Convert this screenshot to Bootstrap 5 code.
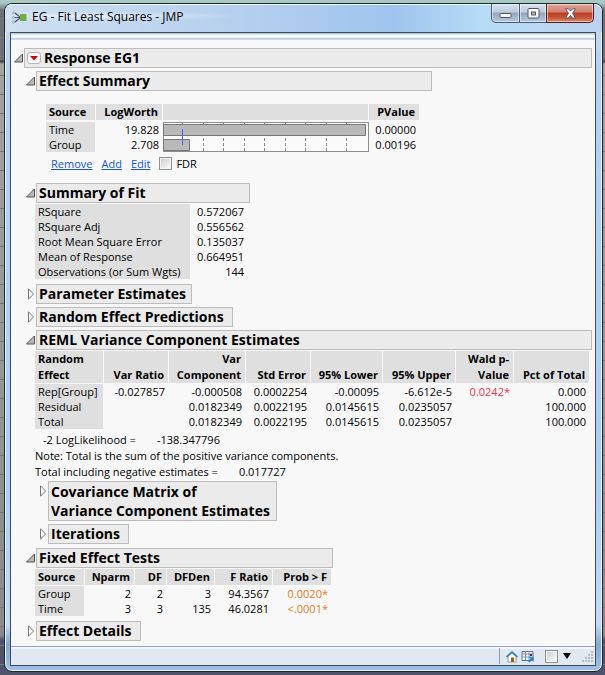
<!DOCTYPE html>
<html lang="en">
<head>
<meta charset="utf-8">
<meta name="viewport" content="width=device-width, initial-scale=1">
<title>EG - Fit Least Squares - JMP</title>
<link href="https://cdn.jsdelivr.net/npm/bootstrap@5.3.0/dist/css/bootstrap.min.css" rel="stylesheet">
<style>
body{font:11px/15px "Open Sans","Noto Sans",sans-serif;color:#000;background:linear-gradient(#a9c9c4 0,#a9c9c4 3px,transparent 10px),repeating-linear-gradient(transparent 0,transparent 18px,#777 18px,#777 19px),linear-gradient(#6c7078 0,#6c7078 60px,#333 61px,#a5a3a0 64px,#8c8a88 635px,#50536c 640px);}
.win{margin:3px 2px 3px 4px;border:1px solid #20262e;border-radius:8px;min-height:calc(100vh - 6px);background:linear-gradient(#c6d8ee 0,#c6d8ee 28px,#b4d3f3 60px,#a9cff8 480px,#c2dcf6 620px,#84aad2 640px,#9fc0e6 100%);box-shadow:inset 0 0 0 1px #e8f5ff;}
.titlebar{height:28px;padding-left:7px;border-radius:7px 7px 0 0;background:radial-gradient(ellipse at 90px 12px,rgba(240,247,253,.8) 0,rgba(220,234,248,.4) 90px,transparent 150px),linear-gradient(90deg,#cfdff0 0,#b5cfee 40%,#9fc4ee 65%,#b7dcf6 80%,#bcd3ef 100%);box-shadow:inset 0 1px #eef8ff;}
.titletext{font-size:12px;line-height:26px;}
.appicon{margin:6px 5px 0 0;}
.wbtn{height:19px;border:1px solid #4c5a6e;border-top:0;padding:0;display:flex;align-items:center;justify-content:center;background:linear-gradient(#d5e2ef 0,#bccada 45%,#93a6bd 50%,#b5c9e0 100%);box-shadow:inset 0 0 0 1px rgba(255,255,255,.5);}
.wmin{width:29px;border-radius:0 0 0 5px;}
.wmax{width:28px;margin-left:-1px;}
.wclose{width:48px;margin-left:-1px;border-color:#571a1c;border-radius:0 0 5px 0;background:linear-gradient(#e3a697 0,#d18070 45%,#b83a23 50%,#c8553a 75%,#dd8a65 100%);}
.client{margin:0 6px 5px 5px;border:1px solid #3f4a5b;background:#f8f8f8;}
.toolstrip{height:7px;background:linear-gradient(#a9bcd8 0,#f7faff 35%,#f7faff 60%,#b9cbe2 80%,#d6e3f2 100%);}
.report{padding:8px 3px 5px 3px;}
.outline-row{display:flex;align-items:flex-start;}
.bar{background:#ebebeb;border:1px solid #bcbcbc;margin:0;padding:0 2px;min-height:20px;font-size:14px;line-height:18px;font-weight:700;color:#000;}
.bar.two{line-height:19px;}
.gap3{margin-bottom:3px;}
.first{margin-top:3px;}
.tog{width:10px;height:20px;padding:0;border:0;background:none;display:flex;align-items:center;flex:none;}
.tog svg{display:block;}
.redtri{width:14px;height:12px;padding:0;border:1px solid #b5b5b5;border-radius:3px;background:#fafafa;display:flex;align-items:center;justify-content:center;margin-right:3px;}
.level1{padding-left:12px;}
.level2{padding:1px 0 0 12px;}
.body1{margin:1px 0 5px 9px;}
.notes{margin:-2px 0 0 9px;line-height:16px;}
.notes .pair{display:flex;gap:21px;}
.effects{padding:13px 0 12px 20px;}
.links{padding:4px 0 0 5px;gap:9px;}
.stat{table-layout:fixed;border-collapse:separate;border-spacing:0;}
.stat th,.stat td{padding:0 4px 0 3px;text-align:right;white-space:nowrap;vertical-align:bottom;}
.stat thead th{background:#dfdfdf;border-right:1px solid #f8f8f8;border-bottom:1px solid #f8f8f8;line-height:16px;font-weight:700;}
.effects .stat thead th{border-bottom-width:2px;}
.stat tbody th{background:#dfdfdf;font-weight:400;border-right:1px solid #f8f8f8;}
.stat tr>:first-child{text-align:left;}
.stat tbody tr{height:15px;}
.stat .plot{padding:0;line-height:0;text-align:left;}
.plot svg{display:block;}
.stat .red{color:#ef3449;}
.stat .orange{color:#e57a1e;}
.cmd{color:#1457cf;text-decoration:underline;}
.tick{appearance:none;width:13px;height:13px;margin:0;border:1px solid #8e8f8f;background:linear-gradient(135deg,#c8ccd1,#fff);outline:1px solid #f4f4f4;outline-offset:-2px;}
.w-eff{width:396px}.w-sum{width:214px}.w-par{width:156px}.w-ran{width:197px}.w-cov{width:229px}.w-it{width:81px}.w-fix{width:297px}.w-det{width:105px}
.statusbar{height:19px;border-top:1px solid #97a0cd;background:#e1e8f2;box-shadow:inset 0 2px #f4f7fb;}
.sep{width:1px;height:16px;background:#8f97a8;margin-right:5px;}
.sbtn{border:0;background:none;padding:0;display:block;line-height:0;margin-right:2px;}
.statusbar .tick{margin:0 4px 0 8px;}
.grip{margin-left:8px;}
</style>
<script src="https://cdn.jsdelivr.net/npm/bootstrap@5.3.0/dist/js/bootstrap.bundle.min.js"></script>
</head>
<body>
<svg width="0" height="0" class="position-absolute" aria-hidden="true">
<symbol id="open" viewBox="0 0 10 10"><path d="M8.500 1v8h-8z" fill="#b9b9b9" stroke="#555"/></symbol>
<symbol id="shut" viewBox="0 0 10 12"><path d="M2.500 .8v10.400l5-5.200z" fill="#fff" stroke="#777"/></symbol>
</svg>
<div class="win d-flex flex-column">
<header class="titlebar d-flex align-items-start">
<svg class="appicon flex-shrink-0" width="15" height="15" viewBox="0 0 15 15" aria-hidden="true"><g fill="none" stroke="#a0a6b5"><circle cx="1.500" cy="3" r="1"/><circle cx="1.500" cy="7.500" r="1"/><circle cx="1.500" cy="12" r="1"/></g><path d="M3 3l5 4M2.500 7.500h5.500M3 12l5-4" stroke="#49505e" stroke-width="1.200"/><path d="M8 4h6.500v7H8z" fill="#6eae3e"/></svg>
<span class="titletext flex-grow-1">EG - Fit Least Squares - JMP</span>
<div class="d-flex me-2">
<button class="wbtn wmin" aria-label="Minimize"><svg class="mt-1" width="13" height="8" viewBox="0 0 13 8"><rect x="1" y="2.500" width="11" height="4" rx="1" fill="#fff" stroke="#535666"/></svg></button>
<button class="wbtn wmax" aria-label="Maximize"><svg width="13" height="11" viewBox="0 0 13 11"><rect x="1" y=".5" width="11" height="9.500" rx="1" fill="#fff" stroke="#535666"/><rect x="4.500" y="4" width="4" height="3" fill="#a9bbd2" stroke="#535666"/></svg></button>
<button class="wbtn wclose" aria-label="Close"><svg width="13" height="11" viewBox="0 0 13 11"><path d="M1.500 .8h3l2 2.200 2-2.200h3l-3 4.500 3 4.700h-3l-2-2.500-2 2.500h-3l3-4.700z" fill="#fff" stroke="#535666"/></svg></button>
</div>
</header>
<div class="client d-flex flex-column flex-grow-1">
<div class="toolstrip"></div>
<main class="report flex-grow-1">
<div class="outline-row"><button class="tog" aria-label="Collapse"><svg width="10" height="10"><use href="#open"/></svg></button><h1 class="bar flex-grow-1 d-flex align-items-center"><button class="redtri" aria-label="Response options"><svg width="10" height="6" viewBox="0 0 10 6"><path d="M1 1h8l-4 4.500z" fill="#c90808"/></svg></button>Response EG1</h1></div>

<div class="level1">
<div class="outline-row first"><button class="tog" aria-label="Collapse"><svg width="10" height="10"><use href="#open"/></svg></button><h2 class="bar w-eff">Effect Summary</h2></div>
<div class="effects">
<table class="stat">
<colgroup><col style="width:50px"><col style="width:67px"><col style="width:206px"><col style="width:51px"></colgroup>
<thead><tr><th>Source</th><th>LogWorth</th><th></th><th>PValue</th></tr></thead>
<tbody>
<tr><th>Time</th><td>19.828</td><td class="plot" rowspan="2"><svg width="206" height="30" viewBox="0 0 206 30" role="img" aria-label="LogWorth bars"><rect x=".5" y=".5" width="205" height="29" fill="#fbfbfb" stroke="#8c8c8c"/><path d="M19.500 1v28M40.500 1v28M60.500 1v28M81.500 1v28M101.500 1v28M122.500 1v28M142.500 1v28M163.500 1v28M183.500 1v28" stroke="#888" stroke-dasharray="3 2"/><path d="M.5 2.500h202v11h-202zM.5 17.500h26v11h-26z" fill="#b9b9b9" stroke="#777"/><rect x="19" y="7" width="1" height="16" fill="#2b6cff"/></svg></td><td>0.00000</td></tr>
<tr><th>Group</th><td>2.708</td><td>0.00196</td></tr>
</tbody></table>
<div class="links d-flex align-items-center"><a class="cmd" href="#">Remove</a><a class="cmd" href="#">Add</a><a class="cmd" href="#">Edit</a><span class="d-flex align-items-center gap-1"><input class="tick" type="checkbox" id="fdr"><label for="fdr">FDR</label></span></div>
</div>

<div class="outline-row"><button class="tog" aria-label="Collapse"><svg width="10" height="10"><use href="#open"/></svg></button><h2 class="bar w-sum">Summary of Fit</h2></div>
<table class="stat body1">
<colgroup><col style="width:156px"><col style="width:57px"></colgroup>
<tbody>
<tr><th>RSquare</th><td>0.572067</td></tr>
<tr><th>RSquare Adj</th><td>0.556562</td></tr>
<tr><th>Root Mean Square Error</th><td>0.135037</td></tr>
<tr><th>Mean of Response</th><td>0.664951</td></tr>
<tr><th>Observations (or Sum Wgts)</th><td>144</td></tr>
</tbody></table>

<div class="outline-row gap3"><button class="tog" aria-label="Expand"><svg width="10" height="12"><use href="#shut"/></svg></button><h2 class="bar w-par">Parameter Estimates</h2></div>
<div class="outline-row gap3"><button class="tog" aria-label="Expand"><svg width="10" height="12"><use href="#shut"/></svg></button><h2 class="bar w-ran">Random Effect Predictions</h2></div>
<div class="outline-row"><button class="tog" aria-label="Collapse"><svg width="10" height="10"><use href="#open"/></svg></button><h2 class="bar flex-grow-1">REML Variance Component Estimates</h2></div>
<table class="stat body1">
<colgroup><col style="width:69px"><col style="width:65px"><col style="width:77px"><col style="width:65px"><col style="width:72px"><col style="width:73px"><col style="width:58px"><col style="width:76px"></colgroup>
<thead><tr><th>Random<br>Effect</th><th>Var Ratio</th><th>Var<br>Component</th><th>Std Error</th><th>95% Lower</th><th>95% Upper</th><th>Wald p-<br>Value</th><th>Pct of Total</th></tr></thead>
<tbody>
<tr><th>Rep[Group]</th><td>-0.027857</td><td>-0.000508</td><td>0.0002254</td><td>-0.00095</td><td>-6.612e-5</td><td class="red">0.0242*</td><td>0.000</td></tr>
<tr><th>Residual</th><td></td><td>0.0182349</td><td>0.0022195</td><td>0.0145615</td><td>0.0235057</td><td></td><td>100.000</td></tr>
<tr><th>Total</th><td></td><td>0.0182349</td><td>0.0022195</td><td>0.0145615</td><td>0.0235057</td><td></td><td>100.000</td></tr>
</tbody></table>
<div class="notes">
<div class="ps-2 pair"><span>-2 LogLikelihood =</span><span>-138.347796</span></div>
<div>Note: Total is the sum of the positive variance components.</div>
<div class="pair"><span>Total including negative estimates =</span><span>0.017727</span></div>
</div>
<div class="level2">
<div class="outline-row gap3"><button class="tog" aria-label="Expand"><svg width="10" height="12"><use href="#shut"/></svg></button><h3 class="bar two w-cov">Covariance Matrix of<br>Variance Component Estimates</h3></div>
<div class="outline-row mb-1"><button class="tog" aria-label="Expand"><svg width="10" height="12"><use href="#shut"/></svg></button><h3 class="bar w-it">Iterations</h3></div>
</div>

<div class="outline-row"><button class="tog" aria-label="Collapse"><svg width="10" height="10"><use href="#open"/></svg></button><h2 class="bar w-fix">Fixed Effect Tests</h2></div>
<table class="stat body1">
<colgroup><col style="width:50px"><col style="width:50px"><col style="width:32px"><col style="width:48px"><col style="width:58px"><col style="width:59px"></colgroup>
<thead><tr><th>Source</th><th>Nparm</th><th>DF</th><th>DFDen</th><th>F Ratio</th><th>Prob &gt; F</th></tr></thead>
<tbody>
<tr><th>Group</th><td>2</td><td>2</td><td>3</td><td>94.3567</td><td class="orange">0.0020*</td></tr>
<tr><th>Time</th><td>3</td><td>3</td><td>135</td><td>46.0281</td><td class="orange">&lt;.0001*</td></tr>
</tbody></table>
<div class="outline-row"><button class="tog" aria-label="Expand"><svg width="10" height="12"><use href="#shut"/></svg></button><h2 class="bar w-det">Effect Details</h2></div>
</div>
</main>
<footer class="statusbar d-flex align-items-center justify-content-end">
<span class="sep"></span>
<button class="sbtn" aria-label="Home"><svg width="14" height="13" viewBox="0 0 14 13"><path d="M3 6v6h8V6L7 3z" fill="#fff" stroke="#8d98a5"/><path d="M1.500 7l5.500-5L12.500 7" fill="none" stroke="#2484b5" stroke-width="1.600"/><path d="M6 7.500h3V12H6z" fill="#906315"/></svg></button>
<button class="sbtn" aria-label="Data table"><svg width="14" height="13" viewBox="0 0 14 13"><path d="M1 1.500h11v9H1z" fill="#fff" stroke="#377bae"/><path d="M1 4h11" stroke="#d76065"/><path d="M1 7h11M4.500 1v9M8 1v9" stroke="#7693bd"/><path d="M7 11.500l2.500-3-2-1.500h5v5l-1.500-2-2.500 2.500z" fill="#2587bd"/><path d="M9 4h2v2H9z" fill="#333"/></svg></button>
<input class="tick" type="checkbox" aria-label="Select window">
<button class="sbtn" aria-label="Window menu"><svg width="10" height="8" viewBox="0 0 10 8"><path d="M1 1h8L5 7z" fill="#000"/></svg></button>
<svg class="grip" width="13" height="13" viewBox="0 0 13 13" aria-hidden="true"><path d="M9 1h2v2H9zM9 4h2v2H9zM6 4h2v2H6zM9 7h2v2H9zM6 7h2v2H6zM3 7h2v2H3zM9 10h2v2H9zM6 10h2v2H6zM3 10h2v2H3zM0 10h2v2H0z" fill="#b3bccb"/></svg>
</footer>
</div>
</div>
</body>
</html>
